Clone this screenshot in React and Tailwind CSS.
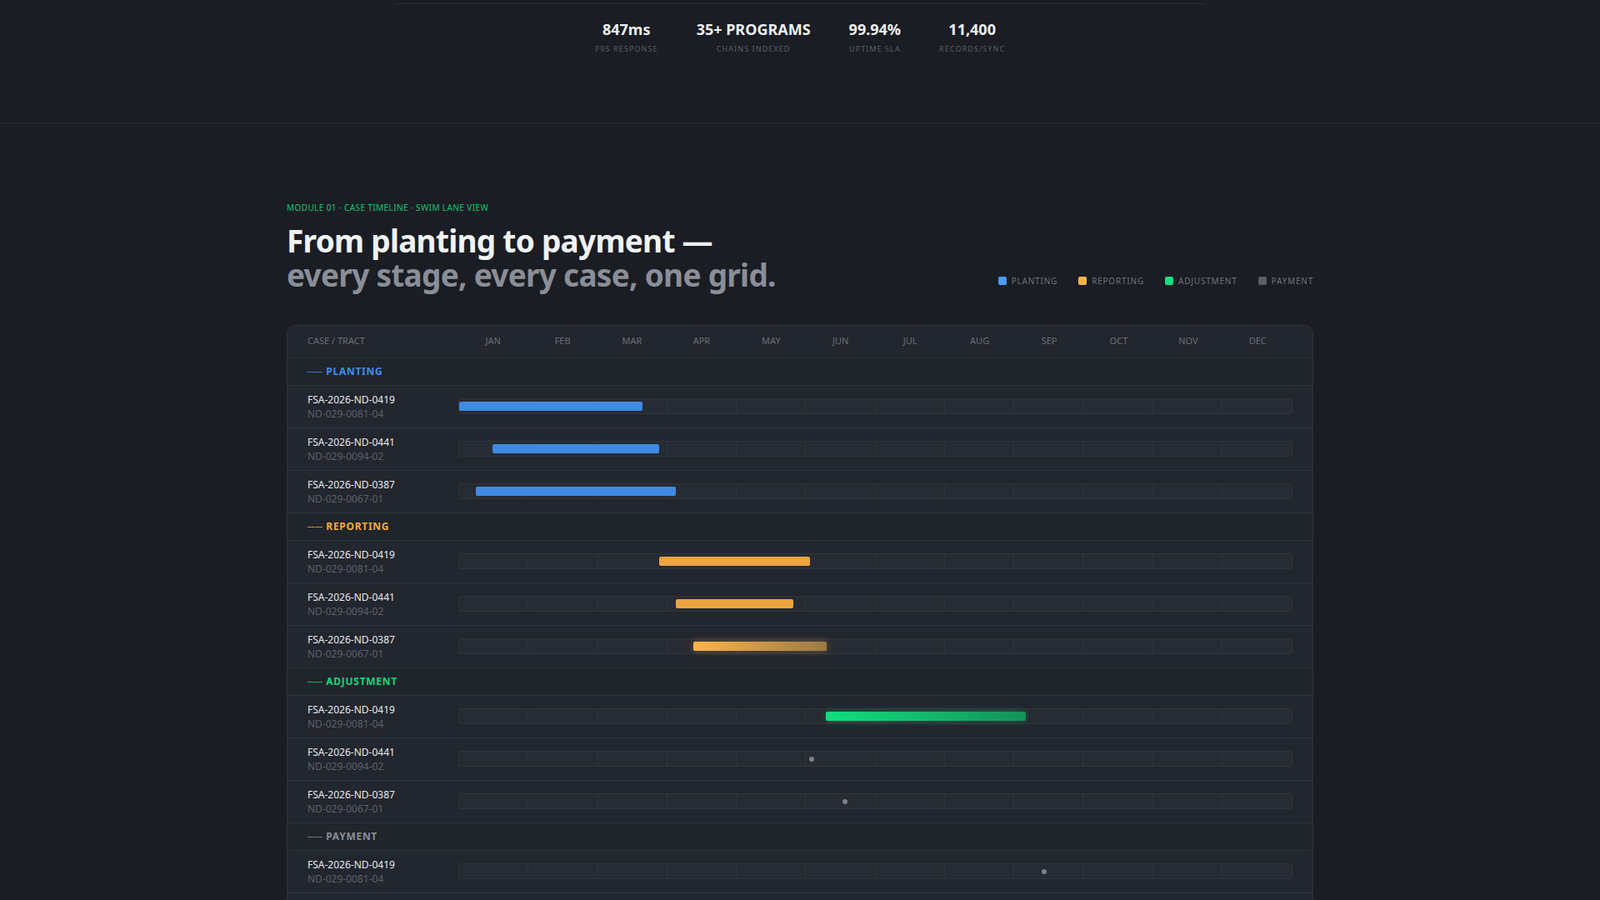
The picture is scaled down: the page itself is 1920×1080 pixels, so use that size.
import React from "react";

const MONTHS = ["JAN", "FEB", "MAR", "APR", "MAY", "JUN", "JUL", "AUG", "SEP", "OCT", "NOV", "DEC"];

const STATS = [
  { value: "847ms", label: "P95 RESPONSE" },
  { value: "35+ PROGRAMS", label: "CHAINS INDEXED" },
  { value: "99.94%", label: "UPTIME SLA" },
  { value: "11,400", label: "RECORDS/SYNC" },
];

const LEGEND = [
  { label: "PLANTING", cls: "bg-[#4a9bff]" },
  { label: "REPORTING", cls: "bg-[#ffb547]" },
  { label: "ADJUSTMENT", cls: "bg-[#10e07f]" },
  { label: "PAYMENT", cls: "bg-[#5b5f69]" },
];

const CASES = [
  ["FSA-2026-ND-0419", "ND-029-0081-04"],
  ["FSA-2026-ND-0441", "ND-029-0094-02"],
  ["FSA-2026-ND-0387", "ND-029-0067-01"],
];

const LANES = [
  {
    name: "PLANTING",
    color: "text-[#3d8eea]",
    items: [
      { bar: [0, 22], cls: "bg-[#3f8ae4]" },
      { bar: [4, 24], cls: "bg-[#3f8ae4]" },
      { bar: [2, 26], cls: "bg-[#3f8ae4]" },
    ],
  },
  {
    name: "REPORTING",
    color: "text-[#f4ab3c]",
    items: [
      { bar: [24, 42.1], cls: "bg-[#eba43f]" },
      { bar: [26, 40.1], cls: "bg-[#eba43f]" },
      { bar: [28.1, 44.1], cls: "bg-gradient-to-r from-[#ffb547] to-[#9a7a45] shadow-[0_0_10px_rgba(255,181,71,0.35)]" },
    ],
  },
  {
    name: "ADJUSTMENT",
    color: "text-[#12d77a]",
    items: [
      { bar: [44, 68.1], cls: "bg-gradient-to-r from-[#0ee07f] to-[#14925a] shadow-[0_0_10px_rgba(16,224,127,0.3)]" },
      { dot: 42.3 },
      { dot: 46.3 },
    ],
  },
  {
    name: "PAYMENT",
    color: "text-[#8a8f99]",
    items: [{ dot: 70.3 }, { dot: 76 }, { dot: 82 }],
  },
];

function Track({ item }) {
  return (
    <div className="relative h-[19px] flex-1 rounded-[3px] border border-[#30343d] bg-[#272b33] grid grid-cols-12">
      {MONTHS.map((m, i) => (
        <div key={m} className={i < 11 ? "border-r border-[#30343d]" : ""} />
      ))}
      {item.bar && (
        <div
          className={"absolute top-[3px] h-[11px] rounded-[2px] " + item.cls}
          style={{ left: item.bar[0] + "%", width: item.bar[1] - item.bar[0] + "%" }}
        />
      )}
      {item.dot && (
        <div
          className="absolute top-1/2 h-[6px] w-[6px] -translate-x-1/2 -translate-y-1/2 rounded-full bg-[#7d828c]"
          style={{ left: item.dot + "%" }}
        />
      )}
    </div>
  );
}

export default function App() {
  return (
    <div className="min-h-screen bg-[#1a1d23] font-['Liberation_Mono'] text-white">
      <div className="flex flex-col items-center">
        <div className="h-px w-[974px] mt-[4px] bg-[#2c3038]" />
        <div className="flex gap-[46px] pt-[17px]">
          {STATS.map((s) => (
            <div key={s.label} className="flex flex-col items-center">
              <div className="text-[18px] font-bold leading-[26px] text-[#eef0f3]">{s.value}</div>
              <div className="mt-[4px] text-[9px] tracking-[0.12em] text-[#5a5f69]">{s.label}</div>
            </div>
          ))}
        </div>
      </div>
      <div className="mt-[81px] border-t border-[#262a31]" />

      <div className="mx-auto w-[1232px] pt-[94px] pb-10">
        <div className="flex items-end justify-between">
          <div>
            <div className="text-[10px] tracking-[0.04em] text-[#14c774]">MODULE 01 · CASE TIMELINE · SWIM LANE VIEW</div>
            <h1 className="mt-[11px] font-['Liberation_Sans'] text-[37px] font-bold leading-[41px] tracking-[-0.02em]">
              <span className="text-[#f1f3f5]">From planting to payment —</span>
              <br />
              <span className="text-[#8a8e97]">every stage, every case, one grid.</span>
            </h1>
          </div>
          <div className="flex gap-[25px] pb-[5px]">
            {LEGEND.map((l) => (
              <div key={l.label} className="flex items-center gap-[6px] text-[10px] tracking-[0.08em] text-[#6d727c]">
                <span className={"h-[10px] w-[10px] rounded-[2px] " + l.cls} />
                {l.label}
              </div>
            ))}
          </div>
        </div>

        <div className="mt-[40px] overflow-hidden rounded-[10px] border border-[#30343c] bg-[#22262e]">
          <div className="flex h-[39px] items-center border-b border-[#30343c] px-[24px]">
            <div className="w-[181px] text-[11px] text-[#6a6f79]">CASE / TRACT</div>
            <div className="grid flex-1 grid-cols-12 text-center text-[11px] text-[#6a6f79]">
              {MONTHS.map((m) => (
                <div key={m}>{m}</div>
              ))}
            </div>
          </div>
          {LANES.map((lane) => (
            <div key={lane.name}>
              <div className="flex h-[33px] items-center border-b border-[#30343c] bg-[#20242b] px-[24px]">
                <span className={"text-[12px] font-bold tracking-[0.06em] " + lane.color}>── {lane.name}</span>
              </div>
              {lane.items.map((item, i) => (
                <div key={i} className="flex h-[51px] items-center border-b border-[#30343c] px-[24px]">
                  <div className="w-[181px]">
                    <div className="text-[12px] leading-[17px] text-[#e8eaee]">{CASES[i][0]}</div>
                    <div className="text-[12px] leading-[17px] text-[#5c616b]">{CASES[i][1]}</div>
                  </div>
                  <Track item={item} />
                </div>
              ))}
            </div>
          ))}
        </div>
      </div>
    </div>
  );
}
